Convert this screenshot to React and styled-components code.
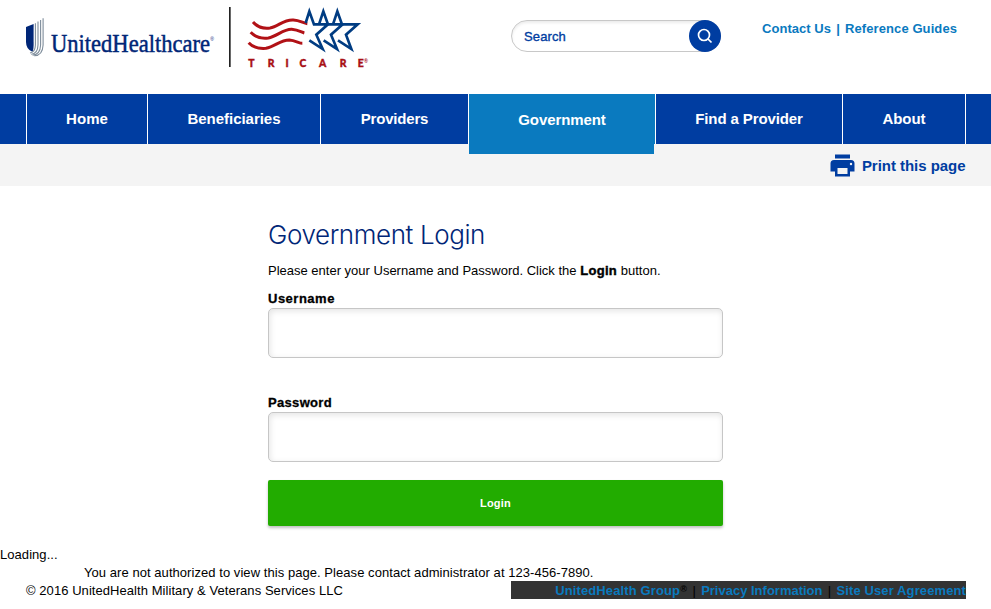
import React from 'react';
import styled, { createGlobalStyle } from 'styled-components';

const GlobalStyle = createGlobalStyle`
  * { box-sizing: border-box; }
  body {
    margin: 0;
    background: #fff;
    color: #000;
    font: 13px/18px "Liberation Sans", Arial, sans-serif;
  }
`;

const Page = styled.div`
  min-height: 609px;
  overflow: hidden;
`;

const Header = styled.header`
  display: flex;
  height: 94px;
  padding: 0 26px;
`;

const Brand = styled.a`
  display: flex;
  width: 485px;
`;

const UhcMark = styled.svg`
  display: block;
  width: 203px;
  height: 80px;
  overflow: visible;
`;

const TricareMark = styled.svg`
  display: block;
  width: 170px;
  height: 80px;
`;

const SearchForm = styled.form`
  display: flex;
  align-items: center;
  justify-content: space-between;
  width: 210px;
  height: 32px;
  margin-top: 20px;
  border-radius: 16px;
  border: 1px solid #c8c8c8;
  box-shadow: inset 0 2px 3px rgba(0, 0, 0, 0.08);
`;

const SearchInput = styled.input`
  width: 160px;
  border: 0;
  padding: 0 0 0 12px;
  outline: 0;
  background: transparent;
  font: 13px "Liberation Sans", Arial, sans-serif;
  letter-spacing: 0.13px;
  &::placeholder {
    color: #003da1;
    opacity: 1;
    -webkit-text-stroke: 0.35px #003da1;
  }
`;

const SearchButton = styled.button`
  display: grid;
  place-items: center;
  width: 32px;
  height: 32px;
  margin-right: -1px;
  padding: 0;
  border: 0;
  border-radius: 50%;
  background: #003da1;
`;

const UtilityLinks = styled.div`
  display: flex;
  gap: 5px;
  margin: 20px 0 0 41px;
  color: #0a7abf;
  font-weight: bold;
  white-space: nowrap;
`;

const TextLink = styled.a`
  color: #0a7abf;
  font-weight: bold;
  letter-spacing: ${({ $track = 0 }) => $track}px;
`;

const Bar = styled.span`
  width: 4px;
  text-align: center;
`;

const Nav = styled.nav`
  display: grid;
  grid-template-columns: 121px 173px 148px 187px 187px 124px;
  height: 50px;
  padding-left: 26px;
  background: #003da1;
`;

const NavItem = styled.a`
  display: flex;
  align-items: center;
  justify-content: center;
  position: relative;
  border-left: 1px solid #fff;
  color: #fff;
  background: ${({ $active }) => ($active ? '#0a7abf' : 'transparent')};
  font-size: 15px;
  font-weight: bold;
  letter-spacing: ${({ $track }) => $track}px;
  padding-top: ${({ $active }) => ($active ? 2 : 0)}px;

  &:last-child { border-right: 1px solid #fff; }

  &::after {
    content: '';
    display: ${({ $active }) => ($active ? 'block' : 'none')};
    position: absolute;
    top: 100%;
    left: 0;
    right: 1px;
    height: 10px;
    background: #0a7abf;
  }
`;

const ToolStrip = styled.div`
  display: flex;
  align-items: center;
  justify-content: flex-end;
  height: 42px;
  padding: 1px 25.5px 0 0;
  background: #f4f4f4;
`;

const PrintLink = styled.a`
  display: flex;
  align-items: center;
  gap: 7px;
  color: #003da1;
  font-size: 15px;
  font-weight: bold;
  letter-spacing: -0.04px;
`;

const Main = styled.main`
  width: 455px;
  height: 359px;
  margin: 0 auto;
  padding-top: 31px;
`;

const Title = styled.h1`
  margin: 0;
  color: #002677;
  font: 300 26px/36px Inter, "Liberation Sans", sans-serif;
  letter-spacing: -0.4px;
  white-space: nowrap;
`;

const Intro = styled.p`
  margin: 9px 0;
  white-space: nowrap;
`;

const Strong = styled.strong`
  letter-spacing: 0.32px;
  -webkit-text-stroke: 0.4px #000;
`;

const Field = styled.label`
  display: block;
  height: 104px;
`;

const FieldLabel = styled.span`
  display: block;
  height: 19px;
  line-height: 20px;
  font-weight: bold;
  letter-spacing: ${({ $track }) => $track}px;
  -webkit-text-stroke: 0.3px #000;
`;

const FieldInput = styled.input`
  display: block;
  width: 100%;
  height: 50px;
  padding: 0 12px;
  border: 1px solid #c6c6c6;
  border-radius: 5px;
  background: #fff;
  box-shadow: inset 1px 2px 6px rgba(0, 0, 0, 0.11);
`;

const LoginButton = styled.button`
  display: block;
  width: 100%;
  height: 46px;
  margin-top: -17px;
  padding: 0;
  border: 0;
  border-radius: 2px;
  background: #22ac00;
  box-shadow: 0 2px 3px rgba(0, 0, 0, 0.25);
  color: #fff;
  font: bold 11px "Liberation Sans", Arial, sans-serif;
  letter-spacing: 0.21px;
`;

const Status = styled.div`
  height: 18px;
  line-height: 20px;
  padding-left: ${({ $indent = 0 }) => $indent}px;
  letter-spacing: 0.056px;
`;

const Footer = styled.footer`
  display: flex;
  justify-content: space-between;
  height: 18px;
  line-height: 20px;
  padding: 0 25px 0 26px;
  letter-spacing: 0.06px;
`;

const FooterLinks = styled.div`
  display: flex;
  justify-content: flex-end;
  width: 455px;
  background: #333;
  white-space: nowrap;
  letter-spacing: 0;
`;

const FooterBar = styled.span`
  width: 14px;
  text-align: center;
`;

const Registered = styled.span`
  width: 7px;
  font-size: 9px;
  line-height: 17px;
  font-weight: bold;
`;

const NAV = [
  ['Home', 0.08],
  ['Beneficiaries', -0.03],
  ['Providers', -0.19],
  ['Government', -0.085, true],
  ['Find a Provider', -0.11],
  ['About', -0.06],
];

function UhcLogo() {
  return (
    <UhcMark viewBox="26 0 203 80" role="img" aria-label="UnitedHealthcare">
      <path d="M26 27 L33.6 24 V45 Q33.6 50 32.3 51.8 Q26 49 26 42 Z" fill="#002677" />
      <g fill="none" stroke="#7e8d9b" strokeWidth="1.1">
        <path d="M35.4 23.2 V45 Q35.3 52 30 53" />
        <path d="M38 21.6 V45 Q37.7 54 31.2 54.2" />
        <path d="M40.6 20 V45 Q40.2 54.8 32.6 55.1" />
        <path d="M43.1 18.3 V45 Q42.6 55.7 34.2 55.8" />
      </g>
      <text
        x="51"
        y="51.6"
        fontFamily="Liberation Serif"
        fontSize="26"
        fill="#002677"
        stroke="#002677"
        strokeWidth="0.5"
        textLength="159"
        lengthAdjust="spacingAndGlyphs"
      >
        UnitedHealthcare
      </text>
      <text x="210.2" y="40.5" fontFamily="Liberation Sans" fontSize="5" fill="#002677">®</text>
    </UhcMark>
  );
}

function TricareLogo() {
  return (
    <TricareMark viewBox="27 0 510 240" role="img" aria-label="Tricare">
      <rect x="27" y="21" width="5" height="180" fill="#222" />
      <g fill="none" stroke="#b11116" strokeWidth="9">
        <path d="M99 66 Q118 88 150 84 C175 80 190 58 220 60 C240 61 250 70 262 71" />
        <path d="M92 97 Q112 118 145 114 C170 110 190 87 215 88 C235 90 245 97 253 99" />
        <path d="M86 128 Q104 148 138 145 C165 140 180 120 208 120 C225 121 238 130 247 130" />
      </g>
      <g fill="none" stroke="#003c82" strokeWidth="8" strokeMiterlimit="8">
        <path d="M257 69 L268 34 L282 73 H324 L289 104 L308 147 L268 121" />
        <path d="M297 73 L310 34 L324 73 H368 L333 104 L351 147 L311 121" />
        <path d="M339 73 L352 34 L366 73 H413 L378 104 L394 147 L354 121" />
      </g>
      <text
        x="94 153 201 249 308 369 422"
        y="200"
        textAnchor="middle"
        fontFamily="Lato"
        fontWeight="900"
        fontSize="31"
        fill="#a80f14"
        stroke="#a80f14"
        strokeWidth="1.2"
      >
        TRICARE
      </text>
      <text x="432" y="190" fontFamily="Liberation Sans" fontWeight="bold" fontSize="16" fill="#a80f14">®</text>
    </TricareMark>
  );
}

function SearchIcon() {
  return (
    <svg width="16" height="16" viewBox="0 0 16 16" fill="none" stroke="#fff" strokeWidth="1.7">
      <circle cx="7" cy="7" r="5.5" />
      <path d="M11 11 L14.5 14.5" />
    </svg>
  );
}

function PrintIcon() {
  return (
    <svg width="25" height="23" viewBox="0 0 25 23" fill="#003da1">
      <path d="M5 0.5 H20 V4.5 H5 Z" />
      <path d="M4 6 H21 Q24.5 6 24.5 9.5 V17.5 H20 V13 H5 V17.5 H0.5 V9.5 Q0.5 6 4 6 Z" />
      <path fillRule="evenodd" d="M5 12 H20 V22.5 H5 Z M7.5 14 V20 H17.5 V14 Z" />
      <circle cx="21" cy="10" r="1.2" fill="#f4f4f4" />
    </svg>
  );
}

export default function App() {
  return (
    <Page>
      <GlobalStyle />
      <Header>
        <Brand>
          <UhcLogo />
          <TricareLogo />
        </Brand>
        <SearchForm>
          <SearchInput placeholder="Search" />
          <SearchButton type="button" aria-label="Search">
            <SearchIcon />
          </SearchButton>
        </SearchForm>
        <UtilityLinks>
          <TextLink $track={0.04}>Contact Us</TextLink>
          <Bar>|</Bar>
          <TextLink $track={0.09}>Reference Guides</TextLink>
        </UtilityLinks>
      </Header>
      <Nav>
        {NAV.map(([label, track, active]) => (
          <NavItem key={label} $track={track} $active={active}>
            {label}
          </NavItem>
        ))}
      </Nav>
      <ToolStrip>
        <PrintLink>
          <PrintIcon />
          Print this page
        </PrintLink>
      </ToolStrip>
      <Main>
        <Title>Government Login</Title>
        <Intro>
          Please enter your Username and Password. Click the <Strong>Login</Strong> button.
        </Intro>
        <Field>
          <FieldLabel $track={0.5}>Username</FieldLabel>
          <FieldInput type="text" />
        </Field>
        <Field>
          <FieldLabel $track={0.32}>Password</FieldLabel>
          <FieldInput type="password" />
        </Field>
        <LoginButton>Login</LoginButton>
      </Main>
      <Status>Loading...</Status>
      <Status $indent={84}>
        You are not authorized to view this page. Please contact administrator at 123-456-7890.
      </Status>
      <Footer>
        <span>© 2016 UnitedHealth Military &amp; Veterans Services LLC</span>
        <FooterLinks>
          <TextLink $track={0.12}>UnitedHealth Group</TextLink>
          <Registered>®</Registered>
          <FooterBar>|</FooterBar>
          <TextLink>Privacy Information</TextLink>
          <FooterBar>|</FooterBar>
          <TextLink $track={0.11}>Site User Agreement</TextLink>
        </FooterLinks>
      </Footer>
    </Page>
  );
}
